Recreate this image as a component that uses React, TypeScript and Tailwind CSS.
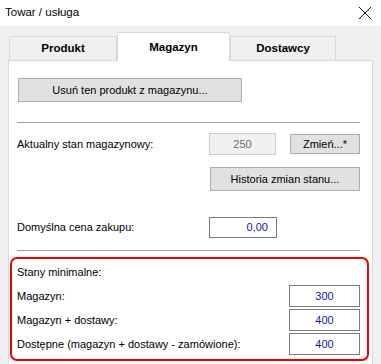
import React from "react";

const font = { fontFamily: '"Liberation Sans", Arial, sans-serif' };

function WinButton({ label, className }: { label: string; className: string }) {
  return (
    <div
      className={`flex items-center justify-center border border-[#adadad] bg-[#e1e1e1] text-[11px] text-black ${className}`}
    >
      {label}
    </div>
  );
}

function ValueBox({ value, className }: { value: string; className: string }) {
  return (
    <div className={`flex items-center border border-[#7a7a7a] bg-white text-[11px] text-[#1515a8] ${className}`}>
      {value}
    </div>
  );
}

export default function App() {
  return (
    <div className="w-[381px] h-[364px] overflow-hidden bg-[#f0f0f0] text-black" style={font}>
      {/* Title bar */}
      <div className="h-[26px] bg-white flex items-center justify-between pl-[5px] pr-[9px]">
        <span className="text-[11.5px]">Towar / usługa</span>
        <svg width="14" height="14" viewBox="0 0 14 14">
          <path d="M1 1 L13 13 M13 1 L1 13" stroke="#111" strokeWidth="1" />
        </svg>
      </div>

      <div className="pl-[8px] pt-[6px]">
        {/* Tabs */}
        <div className="flex items-end h-[29px] pl-[1px] relative z-10 -mb-px">
          <div className="w-[108px] h-[24px] mb-px border border-b-0 border-[#d9d9d9] bg-[#f0f0f0] flex items-center justify-center text-[11.5px] font-bold pt-[1px]">
            Produkt
          </div>
          <div className="w-[113px] h-[29px] border border-b-0 border-[#d9d9d9] bg-white flex items-start justify-center text-[11.5px] font-bold pt-[6px]">
            Magazyn
          </div>
          <div className="w-[106px] h-[24px] mb-px border border-b-0 border-[#d9d9d9] bg-[#f0f0f0] flex items-center justify-center text-[11.5px] font-bold pt-[1px]">
            Dostawcy
          </div>
        </div>

        {/* Panel */}
        <div className="w-[365px] h-[310px] border border-[#d9d9d9] bg-white pt-[17px]">
          <div className="pl-[9px]">
            <WinButton label="Usuń ten produkt z magazynu..." className="w-[224px] h-[24px]" />
          </div>

          <div className="ml-[8px] mt-[20px] w-[343px] h-px bg-[#a0a0a0]" />

          <div className="flex items-center pl-[8px] mt-[10px] h-[22px] text-[11px]">
            <span className="w-[192px]">Aktualny stan magazynowy:</span>
            <div className="w-[67px] h-[22px] border border-[#cccccc] bg-[#f0f0f0] flex items-center justify-center text-[#6d6d6d]">
              250
            </div>
            <WinButton label="Zmień...*" className="ml-[14px] w-[70px] h-[20px]" />
          </div>

          <div className="pl-[201px] mt-[12px]">
            <WinButton label="Historia zmian stanu..." className="w-[150px] h-[24px]" />
          </div>

          <div className="flex items-center pl-[8px] mt-[26px] h-[21px] text-[11px]">
            <span className="w-[192px]">Domyślna cena zakupu:</span>
            <ValueBox value="0,00" className="w-[68px] h-[21px] justify-end pr-[8px]" />
          </div>

          <div className="ml-[8px] mt-[12px] w-[343px] h-px bg-[#a0a0a0]" />

          {/* Minimum stock */}
          <div className="ml-[1px] mt-[6px] w-[359px] h-[104px] border-2 border-[#f00000] rounded-[7px] pl-[5px] pr-[7px] pt-[3px] text-[11px]">
            <div className="h-[20px] flex items-center">Stany minimalne:</div>
            <div className="mt-[3px] flex flex-col gap-[2px]">
              <div className="flex items-center justify-between h-[22px]">
                <span>Magazyn:</span>
                <ValueBox value="300" className="w-[71px] h-[22px] justify-center" />
              </div>
              <div className="flex items-center justify-between h-[22px]">
                <span>Magazyn + dostawy:</span>
                <ValueBox value="400" className="w-[71px] h-[22px] justify-center" />
              </div>
              <div className="flex items-center justify-between h-[22px]">
                <span>Dostępne (magazyn + dostawy - zamówione):</span>
                <ValueBox value="400" className="w-[71px] h-[22px] justify-center" />
              </div>
            </div>
          </div>
        </div>
      </div>
    </div>
  );
}
